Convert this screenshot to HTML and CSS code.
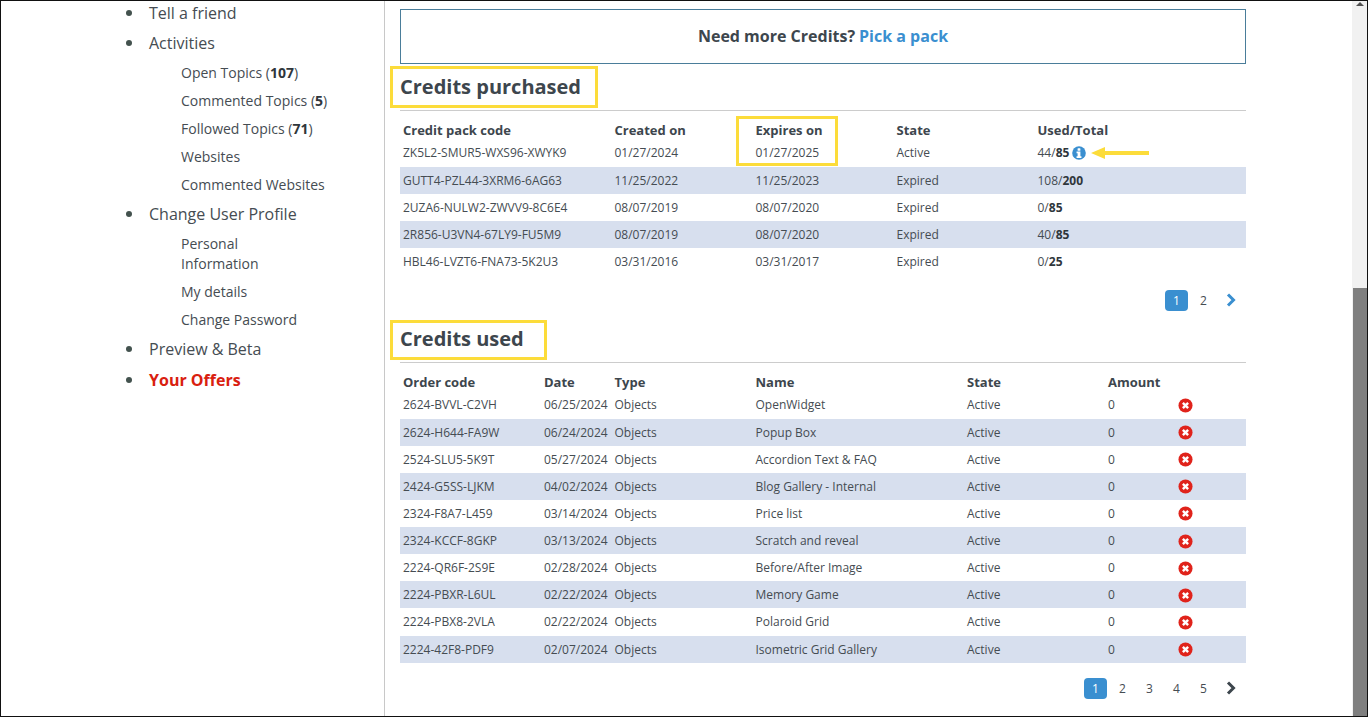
FILE: index.html
```html
<!DOCTYPE html>
<html lang="en">
<head>
<meta charset="utf-8">
<title>Credits</title>
<link rel="stylesheet" href="styles.css">
</head>
<body>
<div class="frame">
  <aside class="side">
    <ul class="menu">
      <li>Tell a friend</li>
      <li>Activities
        <ul class="sub">
          <li>Open Topics (<b>107</b>)</li>
          <li>Commented Topics (<b>5</b>)</li>
          <li>Followed Topics (<b>71</b>)</li>
          <li>Websites</li>
          <li>Commented Websites</li>
        </ul>
      </li>
      <li>Change User Profile
        <ul class="sub">
          <li>Personal<br>Information</li>
          <li>My details</li>
          <li>Change Password</li>
        </ul>
      </li>
      <li>Preview &amp; Beta</li>
      <li class="offer"><span>Your Offers</span></li>
    </ul>
  </aside>
  <main class="main">
    <div class="banner">Need more Credits? <a>Pick a pack</a></div>

    <h2 class="title"><span class="mark">Credits purchased</span></h2>
    <table class="grid">
      <colgroup><col class="c3"><col class="c2"><col class="c2"><col class="c2"><col class="c3"></colgroup>
      <thead><tr><th>Credit pack code</th><th>Created on</th><th class="expires">Expires on<i class="expires-box"></i></th><th>State</th><th>Used/Total</th></tr></thead>
      <tbody>
        <tr><td>ZK5L2-SMUR5-WXS96-XWYK9</td><td>01/27/2024</td><td>01/27/2025</td><td>Active</td><td class="used">44/<b>85</b> <svg class="info" viewBox="0 0 16 16" aria-hidden="true"><circle cx="8" cy="8" r="7.8" fill="#3a8fd0"/><rect x="6.4" y="2.6" width="3.2" height="2.8" rx=".6" fill="#fff"/><path d="M5.2 6.4h4.4v5.4h1.2v1.8H5.2v-1.8h1.2V8.2H5.2z" fill="#fff"/></svg><svg class="arrow" viewBox="0 0 58 12" aria-hidden="true"><path d="M0 6 14 0v4h44v4H14v4z" fill="#fcdc3a"/></svg></td></tr>
        <tr><td>GUTT4-PZL44-3XRM6-6AG63</td><td>11/25/2022</td><td>11/25/2023</td><td>Expired</td><td>108/<b>200</b></td></tr>
        <tr><td>2UZA6-NULW2-ZWVV9-8C6E4</td><td>08/07/2019</td><td>08/07/2020</td><td>Expired</td><td>0/<b>85</b></td></tr>
        <tr><td>2R856-U3VN4-67LY9-FU5M9</td><td>08/07/2019</td><td>08/07/2020</td><td>Expired</td><td>40/<b>85</b></td></tr>
        <tr><td>HBL46-LVZT6-FNA73-5K2U3</td><td>03/31/2016</td><td>03/31/2017</td><td>Expired</td><td>0/<b>25</b></td></tr>
      </tbody>
    </table>
    <nav class="pager"><span class="on">1</span><span>2</span><svg class="chev blue" viewBox="0 0 10 14" aria-hidden="true"><path d="M2 1.5 7.5 7 2 12.5" fill="none" stroke="currentColor" stroke-width="3"/></svg></nav>

    <h2 class="title"><span class="mark mark-b">Credits used</span></h2>
    <table class="grid">
      <colgroup><col class="c2"><col class="c1"><col class="c2"><col class="c3"><col class="c2"><col class="c1"><col class="c1"></colgroup>
      <thead><tr><th>Order code</th><th>Date</th><th>Type</th><th>Name</th><th>State</th><th>Amount</th><th></th></tr></thead>
      <tbody id="orders">
        <tr><td>2624-BVVL-C2VH</td><td>06/25/2024</td><td>Objects</td><td>OpenWidget</td><td>Active</td><td>0</td><td><svg class="del" viewBox="0 0 16 16" aria-hidden="true"><circle cx="8" cy="8" r="7.5" fill="#e0231b"/><path d="M5.2 5.2l5.6 5.6M10.8 5.2l-5.6 5.6" stroke="#fff" stroke-width="2.6"/></svg></td></tr>
        <tr><td>2624-H644-FA9W</td><td>06/24/2024</td><td>Objects</td><td>Popup Box</td><td>Active</td><td>0</td><td><svg class="del" viewBox="0 0 16 16" aria-hidden="true"><circle cx="8" cy="8" r="7.5" fill="#e0231b"/><path d="M5.2 5.2l5.6 5.6M10.8 5.2l-5.6 5.6" stroke="#fff" stroke-width="2.6"/></svg></td></tr>
        <tr><td>2524-SLU5-5K9T</td><td>05/27/2024</td><td>Objects</td><td>Accordion Text &amp; FAQ</td><td>Active</td><td>0</td><td><svg class="del" viewBox="0 0 16 16" aria-hidden="true"><circle cx="8" cy="8" r="7.5" fill="#e0231b"/><path d="M5.2 5.2l5.6 5.6M10.8 5.2l-5.6 5.6" stroke="#fff" stroke-width="2.6"/></svg></td></tr>
        <tr><td>2424-G5SS-LJKM</td><td>04/02/2024</td><td>Objects</td><td>Blog Gallery - Internal</td><td>Active</td><td>0</td><td><svg class="del" viewBox="0 0 16 16" aria-hidden="true"><circle cx="8" cy="8" r="7.5" fill="#e0231b"/><path d="M5.2 5.2l5.6 5.6M10.8 5.2l-5.6 5.6" stroke="#fff" stroke-width="2.6"/></svg></td></tr>
        <tr><td>2324-F8A7-L459</td><td>03/14/2024</td><td>Objects</td><td>Price list</td><td>Active</td><td>0</td><td><svg class="del" viewBox="0 0 16 16" aria-hidden="true"><circle cx="8" cy="8" r="7.5" fill="#e0231b"/><path d="M5.2 5.2l5.6 5.6M10.8 5.2l-5.6 5.6" stroke="#fff" stroke-width="2.6"/></svg></td></tr>
        <tr><td>2324-KCCF-8GKP</td><td>03/13/2024</td><td>Objects</td><td>Scratch and reveal</td><td>Active</td><td>0</td><td><svg class="del" viewBox="0 0 16 16" aria-hidden="true"><circle cx="8" cy="8" r="7.5" fill="#e0231b"/><path d="M5.2 5.2l5.6 5.6M10.8 5.2l-5.6 5.6" stroke="#fff" stroke-width="2.6"/></svg></td></tr>
        <tr><td>2224-QR6F-2S9E</td><td>02/28/2024</td><td>Objects</td><td>Before/After Image</td><td>Active</td><td>0</td><td><svg class="del" viewBox="0 0 16 16" aria-hidden="true"><circle cx="8" cy="8" r="7.5" fill="#e0231b"/><path d="M5.2 5.2l5.6 5.6M10.8 5.2l-5.6 5.6" stroke="#fff" stroke-width="2.6"/></svg></td></tr>
        <tr><td>2224-PBXR-L6UL</td><td>02/22/2024</td><td>Objects</td><td>Memory Game</td><td>Active</td><td>0</td><td><svg class="del" viewBox="0 0 16 16" aria-hidden="true"><circle cx="8" cy="8" r="7.5" fill="#e0231b"/><path d="M5.2 5.2l5.6 5.6M10.8 5.2l-5.6 5.6" stroke="#fff" stroke-width="2.6"/></svg></td></tr>
        <tr><td>2224-PBX8-2VLA</td><td>02/22/2024</td><td>Objects</td><td>Polaroid Grid</td><td>Active</td><td>0</td><td><svg class="del" viewBox="0 0 16 16" aria-hidden="true"><circle cx="8" cy="8" r="7.5" fill="#e0231b"/><path d="M5.2 5.2l5.6 5.6M10.8 5.2l-5.6 5.6" stroke="#fff" stroke-width="2.6"/></svg></td></tr>
        <tr><td>2224-42F8-PDF9</td><td>02/07/2024</td><td>Objects</td><td>Isometric Grid Gallery</td><td>Active</td><td>0</td><td><svg class="del" viewBox="0 0 16 16" aria-hidden="true"><circle cx="8" cy="8" r="7.5" fill="#e0231b"/><path d="M5.2 5.2l5.6 5.6M10.8 5.2l-5.6 5.6" stroke="#fff" stroke-width="2.6"/></svg></td></tr>
      </tbody>
    </table>
    <nav class="pager"><span class="on">1</span><span>2</span><span>3</span><span>4</span><span>5</span><svg class="chev" viewBox="0 0 10 14" aria-hidden="true"><path d="M2 1.5 7.5 7 2 12.5" fill="none" stroke="currentColor" stroke-width="3"/></svg></nav>
  </main>
  <div class="scrollbar"><i class="scroll-up"></i><div class="thumb"></div></div>
</div>
</body>
</html>
```
FILE: styles.css
```css
* { box-sizing: border-box; }
html, body { margin: 0; height: 100%; overflow: hidden; }
body { font-family: "Open Sans", sans-serif; color: #454c52; background: #fff; }
.frame { display: flex; height: 717px; border: 1px solid #111; overflow: hidden; }
.side { width: 384px; flex: none; border-right: 1px solid #c8c8c8; }
.menu { list-style: none; margin: 0; padding: 1px 0 0 148px; font-size: 16px; line-height: 22px; }
.menu > li { position: relative; margin-bottom: 8px; }
.menu > li::before { content: ""; position: absolute; left: -23px; top: 8px; width: 6px; height: 6px; border-radius: 50%; background: #43524e; }
.sub { list-style: none; margin: 0; padding: 9px 0 0 32px; font-size: 14px; line-height: 20px; width: 190px; }
.sub li { margin-bottom: 8px; }
.sub li:last-child { margin-bottom: 0; }
.sub b, td b { color: #2f363b; }
.offer { margin-top: 9px; font-weight: 700; }
.offer span { color: #d9200f; }
.main { flex: 1; min-width: 0; padding: 8px 106px 0 15px; }
.banner { height: 55px; padding-bottom: 2px; border: 1px solid #4a7d9a; display: flex; align-items: center; justify-content: center; gap: 4px; font-size: 16px; font-weight: 700; color: #3d464d; }
.banner a { color: #3a8fd0; }
.title { height: 47px; margin: 0; padding-top: 7px; font-size: 20px; line-height: 32px; font-weight: 700; color: #3d464d; border-bottom: 1px solid #ccc; }
.mark { position: relative; display: inline-block; }
.mark::after { content: ""; position: absolute; left: -10px; right: -17px; top: -5px; bottom: -5px; border: 3px solid #fcdc3a; }
.mark-b::after { right: -23px; top: -3px; }
.grid { width: 846px; table-layout: fixed; border-collapse: collapse; font-size: 12px; }
.c1 { width: 70.5px; }
.c2 { width: 141px; }
.c3 { width: 211.5px; }
th { height: 28.4px; padding: 9px 3px 0; text-align: left; font-size: 13px; font-weight: 700; line-height: 18px; white-space: nowrap; color: #3d464d; }
td { height: 27.125px; padding: 1px 3px 0; line-height: 18px; white-space: nowrap; }
tbody tr:nth-child(even) { background: #d7dfee; }
.expires { position: relative; }
.expires-box { position: absolute; left: -17px; top: 5px; width: 102px; height: 50px; border: 3px solid #fcdc3a; }
.used { position: relative; }
.info { width: 14px; height: 14px; vertical-align: -3px; }
.arrow { position: absolute; left: 56px; top: 8px; width: 58px; height: 12px; }
.del { width: 15px; height: 15px; display: block; margin-left: -1px; }
.pager { display: flex; justify-content: flex-end; align-items: flex-start; height: 41px; padding: 15px 10px 0 0; font-size: 12px; }
.pager span { width: 23px; height: 21px; margin-right: 4px; border-radius: 4px; display: flex; align-items: center; justify-content: center; }
.pager .on { background: #3a8fd0; color: #fff; }
.chev { width: 10px; height: 14px; margin: 3px 0 0 7px; color: #3d464d; }
.chev.blue { color: #3a8fd0; }
.scrollbar { flex: none; width: 15px; background: #f1f1f1; position: relative; }
.scroll-up { position: absolute; left: 4px; top: 1px; border: 4px solid transparent; border-top: 0; border-bottom: 4px solid #505050; }
.thumb { position: absolute; left: 1px; right: 0; top: 287px; bottom: 0; background: #7f7f7f; }
```
